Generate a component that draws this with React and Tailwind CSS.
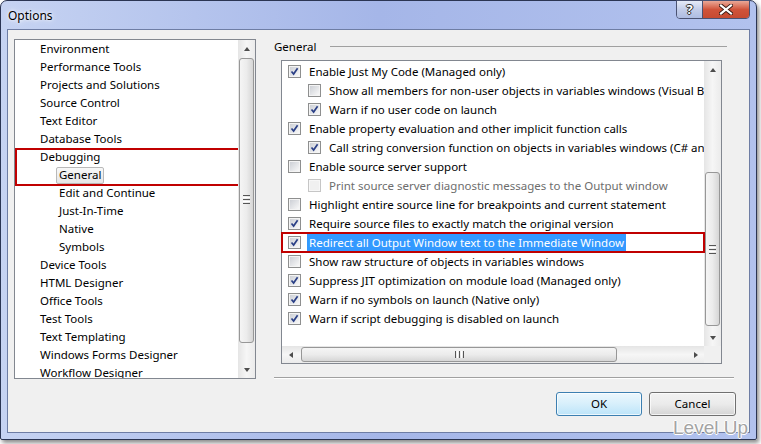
import React from "react";

const treeItems = [
  { label: "Environment" },
  { label: "Performance Tools" },
  { label: "Projects and Solutions" },
  { label: "Source Control" },
  { label: "Text Editor" },
  { label: "Database Tools" },
  { label: "Debugging", group: true },
  { label: "General", sub: true, selected: true, group: true },
  { label: "Edit and Continue", sub: true },
  { label: "Just-In-Time", sub: true },
  { label: "Native", sub: true },
  { label: "Symbols", sub: true },
  { label: "Device Tools" },
  { label: "HTML Designer" },
  { label: "Office Tools" },
  { label: "Test Tools" },
  { label: "Text Templating" },
  { label: "Windows Forms Designer" },
  { label: "Workflow Designer" },
];

const options = [
  { label: "Enable Just My Code (Managed only)", checked: true },
  { label: "Show all members for non-user objects in variables windows (Visual Basic only)", sub: true },
  { label: "Warn if no user code on launch", sub: true, checked: true },
  { label: "Enable property evaluation and other implicit function calls", checked: true },
  { label: "Call string conversion function on objects in variables windows (C# and JavaScript only)", sub: true, checked: true },
  { label: "Enable source server support" },
  { label: "Print source server diagnostic messages to the Output window", sub: true, disabled: true },
  { label: "Highlight entire source line for breakpoints and current statement" },
  { label: "Require source files to exactly match the original version", checked: true },
  { label: "Redirect all Output Window text to the Immediate Window", checked: true, selected: true },
  { label: "Show raw structure of objects in variables windows" },
  { label: "Suppress JIT optimization on module load (Managed only)", checked: true },
  { label: "Warn if no symbols on launch (Native only)", checked: true },
  { label: "Warn if script debugging is disabled on launch", checked: true },
];

function CheckBox({ checked, disabled }) {
  return (
    <span
      className={`w-[13px] h-[13px] shrink-0 border flex items-center justify-center ${
        disabled ? "border-[#c6c6c6] bg-[#f7f7f7]" : "border-[#8e8f8f] bg-[#f4f4f4]"
      }`}
    >
      <span
        className={`w-[9px] h-[9px] flex items-center justify-center ${
          disabled ? "bg-[#f0f0f0]" : "bg-gradient-to-br from-[#cdd0d6] to-[#f8f8f8]"
        }`}
      >
        {checked && (
          <svg width="9" height="9" viewBox="0 0 9 9">
            <path d="M1.5 4.5 L3.6 7 L7.6 1.2" fill="none" stroke="#2a3f86" strokeWidth="1.7" />
          </svg>
        )}
      </span>
    </span>
  );
}

function Grip({ horizontal }) {
  if (horizontal) {
    return (
      <div className="flex gap-[1px]">
        <span className="w-[1px] h-[7px] bg-[#555]" />
        <span className="w-[1px] h-[7px] bg-white" />
        <span className="w-[1px] h-[7px] bg-[#555]" />
        <span className="w-[1px] h-[7px] bg-white" />
        <span className="w-[1px] h-[7px] bg-[#555]" />
      </div>
    );
  }
  return (
    <div className="flex flex-col gap-[1px]">
      <span className="w-[7px] h-[1px] bg-[#555]" />
      <span className="w-[7px] h-[1px] bg-white" />
      <span className="w-[7px] h-[1px] bg-[#555]" />
      <span className="w-[7px] h-[1px] bg-white" />
      <span className="w-[7px] h-[1px] bg-[#555]" />
    </div>
  );
}

function VScroll({ gapClass, thumbClass, gripTop }) {
  return (
    <div className="w-[17px] shrink-0 flex flex-col bg-gradient-to-r from-[#e5e5e5] via-[#f6f6f6] to-[#ebebeb]">
      <div className="h-[17px] shrink-0 flex items-center justify-center">
        <span className="w-0 h-0 border-x-[3.5px] border-x-transparent border-b-[4px] border-b-[#4d4d4d]" />
      </div>
      <div className={gapClass} />
      <div
        className={`${thumbClass} mx-[1px] shrink-0 rounded-[3px] border border-[#979797] bg-gradient-to-r from-[#f5f5f5] via-[#ececec] to-[#d6d6d6] flex flex-col items-center ${
          gripTop ? "justify-start" : "justify-center"
        }`}
      >
        {gripTop ? <div className={gripTop} /> : null}
        <Grip />
      </div>
      <div className="flex-1" />
      <div className="h-[17px] shrink-0 flex items-center justify-center">
        <span className="w-0 h-0 border-x-[3.5px] border-x-transparent border-t-[4px] border-t-[#4d4d4d]" />
      </div>
    </div>
  );
}

function HScroll() {
  return (
    <div className="h-[17px] shrink-0 flex">
      <div className="flex-1 flex bg-gradient-to-b from-[#e5e5e5] via-[#f6f6f6] to-[#ebebeb]">
        <div className="w-[17px] shrink-0 flex items-center justify-center">
          <span className="w-0 h-0 border-y-[3.5px] border-y-transparent border-r-[4px] border-r-[#4d4d4d]" />
        </div>
        <div className="w-[2px] shrink-0" />
        <div className="w-[316px] my-[1px] shrink-0 rounded-[3px] border border-[#979797] bg-gradient-to-b from-[#f5f5f5] via-[#ececec] to-[#d6d6d6] flex items-center justify-center">
          <Grip horizontal />
        </div>
        <div className="flex-1" />
        <div className="w-[17px] shrink-0 flex items-center justify-center">
          <span className="w-0 h-0 border-y-[3.5px] border-y-transparent border-l-[4px] border-l-[#4d4d4d]" />
        </div>
      </div>
      <div className="w-[17px] shrink-0 bg-[#f0f0f0]" />
    </div>
  );
}

function TreeRow({ item }) {
  return (
    <div className={`h-[18px] flex items-center whitespace-nowrap ${item.sub ? "pl-[41px]" : "pl-[25px]"}`}>
      {item.selected ? (
        <span className="h-[17px] px-[2px] flex items-center rounded-[2px] border border-[#b9b9b9] bg-gradient-to-b from-[#f8f8f8] to-[#e6e6e6]">
          {item.label}
        </span>
      ) : (
        <span className={item.sub ? "pl-[3px]" : ""}>{item.label}</span>
      )}
    </div>
  );
}

function OptionRow({ opt }) {
  return (
    <div className="relative h-[19px]">
      <div
        className={`h-full flex items-center overflow-hidden whitespace-nowrap ${
          opt.sub ? "pl-[26px]" : "pl-[6px]"
        }`}
      >
        <CheckBox checked={opt.checked} disabled={opt.disabled} />
        <span
          className={`ml-[6px] px-[2px] h-[17px] flex items-center ${
            opt.selected ? "bg-[#3399ff] text-white" : opt.disabled ? "text-[#6d6d6d]" : "text-black"
          }`}
        >
          {opt.label}
        </span>
      </div>
      {opt.selected && (
        <div className="absolute -left-px -top-px -right-px -bottom-px border-2 border-[#c00000]" />
      )}
    </div>
  );
}

export default function App() {
  const before = treeItems.filter((t) => !t.group).slice(0, 6);
  const group = treeItems.filter((t) => t.group);
  const after = treeItems.slice(8);

  return (
    <div className="w-[761px] h-[444px] bg-white relative overflow-hidden font-['Noto_Sans',sans-serif] text-[11.5px] text-black">
      <div className="w-[757px] h-[440px] flex flex-col rounded-t-[7px] rounded-b-[2px] border border-[#2b3553] bg-gradient-to-r from-[#c6d3f2] via-[#a5b6e8] to-[#b2c2ee] shadow-[2px_3px_4px_rgba(0,0,0,0.45)]">
        {/* Title bar */}
        <div className="h-[28px] shrink-0 flex items-start">
          <span className="pl-[7px] pt-[6px] text-[12px] text-black [text-shadow:0_0_6px_#ffffff,0_0_3px_#ffffff]">
            Options
          </span>
          <div className="ml-auto mr-[6px] flex h-[19px] -mt-px border border-[#4a5272] rounded-b-[4px] overflow-hidden">
            <div className="w-[26px] flex items-center justify-center bg-gradient-to-b from-[#e6ebf7] via-[#c3cde9] to-[#aebce2] border-r border-[#4a5272]">
              <span className="text-[13px] font-bold text-white leading-none [text-shadow:0_0_1px_#222,1px_0_0_#333,-1px_0_0_#333,0_1px_0_#333,0_-1px_0_#333]">
                ?
              </span>
            </div>
            <div className="w-[46px] flex items-center justify-center bg-gradient-to-b from-[#e9a897] via-[#d0533a] to-[#c64a31]">
              <svg width="14" height="11" viewBox="0 0 14 11">
                <path d="M2 1.5 L12 9.5 M12 1.5 L2 9.5" stroke="#3a1a14" strokeWidth="4" strokeLinecap="square" />
                <path d="M2 1.5 L12 9.5 M12 1.5 L2 9.5" stroke="#ffffff" strokeWidth="2.2" strokeLinecap="square" />
              </svg>
            </div>
          </div>
        </div>

        {/* Client area */}
        <div className="flex-1 mx-[6px] mb-[6px] border border-[#6e7da4] bg-[#f0f0f0] flex pt-[9px] pl-[6px]">
          {/* Tree */}
          <div className="w-[242px] h-[340px] shrink-0 border border-[#828790] bg-white flex">
            <div className="flex-1 overflow-hidden">
              {before.map((t) => (
                <TreeRow key={t.label} item={t} />
              ))}
              <div className="relative">
                {group.map((t) => (
                  <TreeRow key={t.label} item={t} />
                ))}
                <div className="absolute left-0 top-0 -right-[2px] -bottom-[2px] border-2 border-[#c00000]" />
              </div>
              {after.map((t) => (
                <TreeRow key={t.label} item={t} />
              ))}
            </div>
            <VScroll gapClass="h-[1px] shrink-0" thumbClass="h-[285px]" gripTop="h-[136px] shrink-0" />
          </div>

          {/* Right panel */}
          <div className="ml-[18px] w-[462px] flex flex-col">
            <div className="h-[15px] flex items-center">
              <span>General</span>
              <div className="ml-[14px] w-[397px] border-t border-[#a0a0a0]" />
            </div>
            <div className="mt-[6px] ml-[7px] w-[441px] h-[304px] border border-[#828790] bg-white flex flex-col">
              <div className="flex-1 flex min-h-0">
                <div className="flex-1 pt-[1px] min-w-0">
                  {options.map((o) => (
                    <OptionRow key={o.label} opt={o} />
                  ))}
                </div>
                <VScroll gapClass="h-[94px] shrink-0" thumbClass="h-[154px]" />
              </div>
              <HScroll />
            </div>
            <div className="mt-[13px] w-[460px] border-t border-[#a0a0a0] border-b border-b-white" />
            <div className="mt-[13px] w-[462px] flex justify-end gap-[7px]">
              <button className="w-[86px] h-[24px] rounded-[3px] border border-[#3c7fb1] bg-gradient-to-b from-[#ecf7fd] via-[#d7effb] to-[#bce4f9] shadow-[inset_0_0_0_1px_rgba(255,255,255,0.7)] text-[11.5px]">
                OK
              </button>
              <button className="w-[87px] h-[24px] rounded-[3px] border border-[#707070] bg-gradient-to-b from-[#f2f2f2] via-[#ebebeb] to-[#d4d4d4] shadow-[inset_0_0_0_1px_rgba(255,255,255,0.7)] text-[11.5px]">
                Cancel
              </button>
            </div>
          </div>
        </div>
      </div>

      {/* watermark */}
      <div className="absolute right-[13px] bottom-[2px] font-['Liberation_Sans',sans-serif] text-[19px] text-[#a3a3a3] [text-shadow:1px_0_0_#fff,-1px_0_0_#fff,0_1px_0_#fff,0_-1px_0_#fff]">
        Level Up
      </div>
    </div>
  );
}
